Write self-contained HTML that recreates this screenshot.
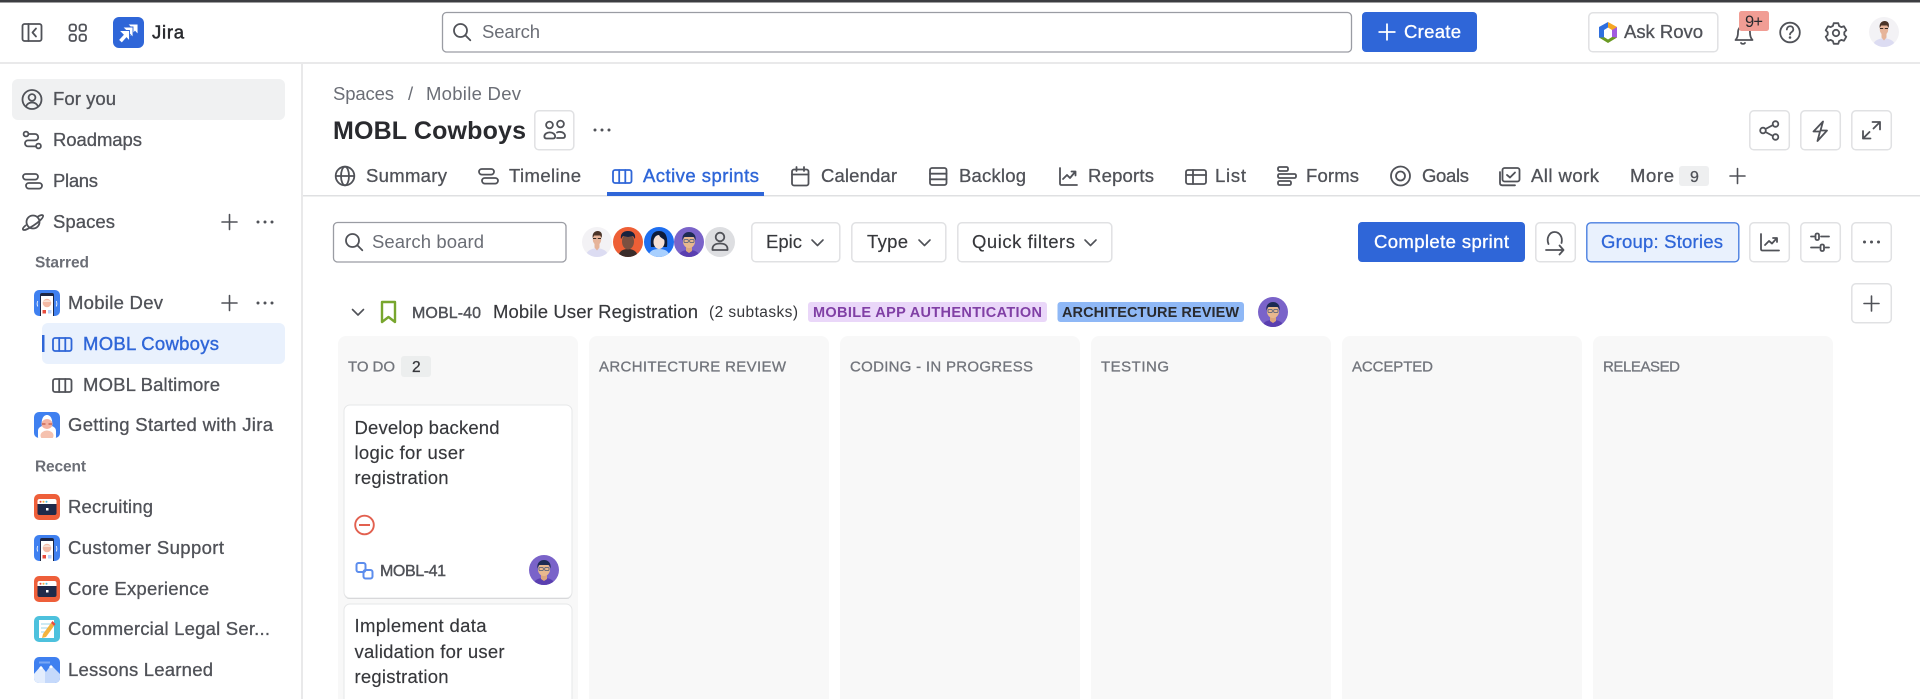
<!DOCTYPE html>
<html lang="en"><head><meta charset="utf-8"><title>MOBL Cowboys - Jira</title>
<style>
html,body{margin:0;padding:0;background:#fff;width:1920px;height:699px;overflow:hidden}
svg{display:block;filter:blur(.3px)}
text{font-family:"Liberation Sans",sans-serif;font-size:18.5px}
.n{fill:#505258;stroke:#505258;stroke-width:.3}
.d{fill:#36373b;stroke:#36373b;stroke-width:.15}
.g{fill:#6b6e76}
.h{font-size:15px;fill:#72757c;stroke:#72757c;stroke-width:.3}
.i{fill:none;stroke:#505258;stroke-width:1.8;stroke-linecap:round;stroke-linejoin:round}
.b{fill:#fff;stroke:#e0e1e3;stroke-width:1.5}
</style></head><body>
<svg width="1920" height="699" viewBox="0 0 1920 699" xmlns="http://www.w3.org/2000/svg">
<defs>
<clipPath id="c"><circle cx="15" cy="15" r="15"/></clipPath>
<clipPath id="t"><rect width="26" height="26" rx="5"/></clipPath>
<g id="board"><rect x="1" y="1" width="18.5" height="13" rx="2"/><path d="M7.2 1v13M13.3 1v13"/></g>
<g id="timeline"><rect x="1" y="1" width="15" height="5.6" rx="2.8"/><rect x="4" y="10" width="16" height="5.6" rx="2.8"/></g>
<g id="plus"><path d="M7.5 0v15M0 7.500h15"/></g>
<g id="dots"><circle cx="0" cy="0" r="1.500" fill="#505258" stroke="none"/><circle cx="7" cy="0" r="1.500" fill="#505258" stroke="none"/><circle cx="14" cy="0" r="1.500" fill="#505258" stroke="none"/></g>
<g id="chev"><path d="M0 0l5.500 5.500L11 0"/></g>
<g id="search"><circle cx="7.500" cy="7.500" r="6.500"/><path d="M12.300 12.300l5 5"/></g>
<path id="jarrow" d="M0 0h10.500v10.500l-3-3.200-4.700 5.200-3.300-3 4.800-5.200z" fill="#fff" stroke="#2f66d8" stroke-width=".9"/>
<symbol id="man" viewBox="0 0 30 30"><g clip-path="url(#c)"><rect width="30" height="30" fill="#f3f2f5"/><path d="M4 30c0-6 4-8 11-9 7 1 11 3 11 9z" fill="#dcdcf2"/><path d="M12.500 17h5v3.500l-2.500 3-2.500-3z" fill="#e5b49a"/><ellipse cx="15" cy="12" rx="4.300" ry="6" fill="#e6b49a"/><path d="M10.700 11c-.7-4.500 1.800-7 5-7s5.200 2.500 3.800 7l-1.300-2.500h-6z" fill="#4a3428"/><path d="M11 11.500h3.200M15.800 11.500H19" stroke="#3a2c25" stroke-width="1"/></g></symbol>
<symbol id="orange" viewBox="0 0 30 30"><g clip-path="url(#c)"><rect width="30" height="30" fill="#ee5f36"/><path d="M5 30c1-6 5-8 10-8s9 2 10 8z" fill="#3a2c2a"/><ellipse cx="15" cy="14.500" rx="6" ry="8" fill="#7a5040"/><path d="M8 12c-1-5 2-8 7-8s8 3 7 8l-2-3-5 1-5-1z" fill="#18233f"/></g></symbol>
<symbol id="blue" viewBox="0 0 30 30"><g clip-path="url(#c)"><rect width="30" height="30" fill="#1f6ff0"/><path d="M7 20c-1-10 1-16 8-16s9 6 8 16z" fill="#0e1b3a"/><path d="M4 30c1-6 5-8 11-8s10 2 11 8z" fill="#a8d0ff"/><ellipse cx="15" cy="15" rx="5.500" ry="7" fill="#f6e0d6"/><path d="M9.500 13c0-4 3-6 5.500-6 0 3 3 4 5.500 6v-5H9z" fill="#0e1b3a"/></g></symbol>
<symbol id="purple" viewBox="0 0 30 30"><g clip-path="url(#c)"><rect width="30" height="30" fill="#7a63c9"/><path d="M4 30c1-5 5-7 11-7s10 2 11 7z" fill="#5a3fb0"/><path d="M12 19h6v5l-3 2-3-2z" fill="#dca67f"/><ellipse cx="15" cy="14.500" rx="6" ry="6.500" fill="#e8b88e"/><path d="M8.500 13.500C7.500 8 11 5 15 5s7.500 3 6.500 8.500L20 10h-10z" fill="#1d2b53"/><rect x="10" y="12.500" width="4.300" height="3" rx="1" fill="none" stroke="#4a5a78" stroke-width=".8"/><rect x="15.700" y="12.500" width="4.300" height="3" rx="1" fill="none" stroke="#4a5a78" stroke-width=".8"/></g></symbol>
<symbol id="mobile" viewBox="0 0 26 26"><g clip-path="url(#t)"><rect width="26" height="26" fill="#3f80f0"/><rect x="6" y="3" width="14" height="25" rx="2" fill="#1d2745"/><rect x="7" y="6" width="12" height="22" fill="#fff"/><circle cx="13" cy="13" r="4.300" fill="#f3b9a4"/><path d="M9 12c.5-2.500 7.500-2.500 8 0z" fill="#f8e0d4"/><rect x="8.500" y="20" width="3.500" height="3.500" fill="#e94c3d"/><rect x="14" y="20" width="3.500" height="3.500" fill="#b9d2fb"/><path d="M3.800 11c-1 2-1 3.500 0 5.500M22.200 11c1 2 1 3.500 0 5.500" stroke="#fff" fill="none" stroke-width=".8"/></g></symbol>
<symbol id="yeti" viewBox="0 0 26 26"><g clip-path="url(#t)"><rect width="26" height="26" fill="#3f80f0"/><path d="M4 26v-7c0-3 2-4 4-5-1-6 1-11 5-11s6 5 5 11c2 1 4 2 4 5v7z" fill="#fff"/><ellipse cx="13" cy="12" rx="5.500" ry="5" fill="#f3b2a2"/><path d="M8 12h3.500M14.500 12H18" stroke="#b3432f" stroke-width="1"/><ellipse cx="13" cy="23.500" rx="6.500" ry="5" fill="#f5c1ae"/></g></symbol>
<symbol id="browser" viewBox="0 0 26 26"><g clip-path="url(#t)"><rect width="26" height="26" fill="#ee5f3a"/><rect x="3.500" y="5" width="19" height="16" rx="2" fill="#1e2a4a"/><path d="M3.500 10V7a2 2 0 0 1 2-2h15a2 2 0 0 1 2 2v3z" fill="#fff"/><circle cx="6.500" cy="7.700" r="1" fill="#e94c3d"/><circle cx="9.500" cy="7.700" r="1" fill="#f3b33e"/><circle cx="12.500" cy="7.700" r="1" fill="#55bfe0"/><rect x="12" y="14" width="2.500" height="2.500" fill="#fff"/></g></symbol>
<symbol id="notes" viewBox="0 0 26 26"><g clip-path="url(#t)"><rect width="26" height="26" fill="#4dc1dd"/><rect x="5" y="4" width="15" height="18" fill="#fff"/><path d="M7 8h10M7 12h8M7 16h6" stroke="#9bd6ea" stroke-width="1"/><path d="M17 7l3 3-8 11-4 1 1-4z" fill="#f3b33e"/><path d="M17 7l3 3 1.500-2-3-3z" fill="#e94c3d"/></g></symbol>
<symbol id="mount" viewBox="0 0 26 26"><g clip-path="url(#t)"><rect width="26" height="26" fill="#3f80f0"/><path d="M0 26V17l7-8 5 6 5-7 9 9v9z" fill="#c5d9fb"/><path d="M0 26V17l7-8 4 5v12z" fill="#e3edfd"/><path d="M5 11l2-2 2 2-2 1.500zM15 10l2-2 2 2-2 1.500z" fill="#fff"/><rect x="5" y="4.500" width="11" height="2" fill="#7aa7f5"/></g></symbol>
</defs>

<rect width="1920" height="699" fill="#fff"/>
<rect width="1920" height="2.500" fill="#3c3d42"/>
<rect y="62" width="1920" height="2" fill="#e9e9ea"/>
<rect x="301" y="64" width="2" height="635" fill="#e9e9ea"/>

<!-- top bar -->
<g class="i"><rect x="22.500" y="24" width="19" height="17" rx="2"/><path d="M28.500 24v17M36 28.500l-3.500 4 3.500 4"/>
<rect x="69.500" y="24.500" width="6.500" height="6.500" rx="2.200"/><rect x="79.500" y="24.500" width="6.500" height="6.500" rx="2.200"/><rect x="69.500" y="34.500" width="6.500" height="6.500" rx="2.200"/><rect x="79.500" y="34.500" width="6.500" height="6.500" rx="2.200"/></g>
<rect x="113" y="17" width="31" height="31" rx="6" fill="#2f66d8"/>
<use href="#jarrow" x="127.500" y="24"/><use href="#jarrow" x="122.500" y="27"/><use href="#jarrow" x="119" y="30.500"/>
<text x="152" y="38.500" textLength="32" style="font-size:18.500px;fill:#292a2e;stroke:#292a2e;stroke-width:.5">Jira</text>

<rect x="442.500" y="12.500" width="909" height="39.500" rx="4" fill="#fff" stroke="#9a9ca3" stroke-width="1.300"/>
<g class="i" transform="translate(453,23)"><use href="#search"/></g>
<text x="482" y="38" textLength="58" class="g">Search</text>
<rect x="1362" y="12" width="115" height="40" rx="4" fill="#2f66d8"/>
<path d="M1387 23.500v17M1378.500 32h17" stroke="#fff" stroke-width="1.800" fill="none"/>
<text x="1404" y="38" textLength="57" fill="#fff" stroke="#fff" stroke-width=".35">Create</text>

<rect x="1588.800" y="12.800" width="129" height="39" rx="4" class="b"/>
<g transform="translate(1599,22)"><path d="M9 0l9 5v5.500H13V8L9 5.500z" fill="#f5a623"/><path d="M18 5v10.500l-5 2.800V8z" fill="#a25be0"/><path d="M18 15.500L9 21l-9-5.500v-.500h5l4 2.500 4-2.500z" fill="#6a9a23"/><path d="M0 15.500V5l9-5v5.500L5 8v7.500z" fill="#2f6fdf"/></g>
<text x="1624" y="38" textLength="79" class="n">Ask Rovo</text>

<g class="i"><path d="M1735.500 40h17c-2-2-2.500-4-2.500-7.500 0-4-2.300-6.500-6-6.500s-6 2.500-6 6.500c0 3.500-.5 5.500-2.500 7.500zM1741 43c.8 1.200 3.200 1.200 4 0"/>
<circle cx="1790" cy="32.500" r="9.800"/><path d="M1786.800 29.500c.4-4.300 6.500-4.300 6.500 0 0 2.600-3.300 2.500-3.300 5"/>
<circle cx="1836" cy="33" r="3.200"/>
<path d="M1833.700 23.700h4.600l.8 2.700 2.200 1.200 2.700-.8 2.300 4-2 2 0 2.400 2 2-2.300 4-2.700-.8-2.200 1.200-.8 2.700h-4.600l-.8-2.700-2.200-1.200-2.700.8-2.300-4 2-2 0-2.400-2-2 2.300-4 2.700.8 2.200-1.200z" transform="translate(0,-.5)"/></g>
<circle cx="1790" cy="37.500" r="1.300" fill="#505258"/>
<rect x="1739" y="11" width="30" height="20" rx="2.500" fill="#f19d94"/>
<text x="1745" y="27" textLength="18" fill="#292a2e" style="font-size:16.500px">9+</text>
<use href="#man" x="1869" y="17" width="30" height="30"/>

<!-- sidebar -->
<rect x="12" y="79" width="273" height="41" rx="6" fill="#f0f1f2"/>
<g class="i">
<g transform="translate(22,90)"><circle cx="10" cy="9.500" r="9.500"/><circle cx="10" cy="7.500" r="3.400"/><path d="M4 16.500c1.200-3 3.300-4 6-4s4.800 1 6 4"/></g>
<g transform="translate(23,131)"><circle cx="3" cy="3" r="2.400"/><circle cx="15.500" cy="15" r="2.400"/><path d="M5.500 3H12a3.200 3.200 0 0 1 0 6.400H5a3 3 0 0 0 0 6h8"/></g>
<g transform="translate(22,173)"><use href="#timeline"/></g>
<g transform="translate(22,212)"><circle cx="11" cy="10" r="6.500"/><path d="M16 4.500c2.600-1.500 4.500-1.800 5-1 .9 1.600-3.400 6.200-9.500 10S1.900 19 1 17.500c-.5-.8.5-2.300 2.500-4"/></g>
</g>
<text x="53" y="105" textLength="63" class="n">For you</text>
<text x="53" y="146" textLength="89" class="n">Roadmaps</text>
<text x="53" y="187" textLength="45" class="n">Plans</text>
<text x="53" y="228" textLength="62" class="n">Spaces</text>
<g class="i" style="stroke-width:1.600"><g transform="translate(222,214.500)"><use href="#plus"/></g><g transform="translate(222,295.500)"><use href="#plus"/></g></g>
<use href="#dots" x="258" y="222"/><use href="#dots" x="258" y="303"/>
<text x="35" y="267.500" textLength="54" class="g" style="font-size:15.500px;font-weight:bold">Starred</text>
<use href="#mobile" x="34" y="290" width="26" height="26"/>
<text x="68" y="309" textLength="95" class="n">Mobile Dev</text>
<rect x="42" y="323" width="243" height="41" rx="6" fill="#e9f1fd"/>
<rect x="42" y="335" width="2.500" height="17" fill="#2f66d8"/>
<g class="i" style="stroke:#2f66d8" transform="translate(52,337)"><use href="#board"/></g>
<text x="83" y="350" textLength="136" fill="#2f66d8" stroke="#2f66d8" stroke-width=".4">MOBL Cowboys</text>
<g class="i" transform="translate(52,378)"><use href="#board"/></g>
<text x="83" y="391" textLength="137" class="n">MOBL Baltimore</text>
<use href="#yeti" x="34" y="412" width="26" height="26"/>
<text x="68" y="431" textLength="205" class="n">Getting Started with Jira</text>
<text x="35" y="471.500" textLength="51" class="g" style="font-size:15.500px;font-weight:bold">Recent</text>
<use href="#browser" x="34" y="494" width="26" height="26"/>
<text x="68" y="513" textLength="85" class="n">Recruiting</text>
<use href="#mobile" x="34" y="535" width="26" height="26"/>
<text x="68" y="554" textLength="156" class="n">Customer Support</text>
<use href="#browser" x="34" y="576" width="26" height="26"/>
<text x="68" y="595" textLength="141" class="n">Core Experience</text>
<use href="#notes" x="34" y="616" width="26" height="26"/>
<text x="68" y="635" textLength="202" class="n">Commercial Legal Ser...</text>
<use href="#mount" x="34" y="657" width="26" height="26"/>
<text x="68" y="676" textLength="145" class="n">Lessons Learned</text>

<!-- header -->
<text x="333" y="100" textLength="61" class="g">Spaces</text>
<text x="408" y="100" class="g">/</text>
<text x="426" y="100" textLength="95" class="g">Mobile Dev</text>
<text x="333" y="139" textLength="193" style="font-size:25px;font-weight:bold;fill:#292a2e">MOBL Cowboys</text>
<rect x="534.800" y="110.800" width="39" height="39" rx="4" class="b"/>
<g class="i"><circle cx="549.500" cy="125" r="3.400"/><circle cx="560.500" cy="124" r="3.400"/><path d="M546.500 138.500h6.500c2.500 0 3-3 .5-5-2-1.500-5.500-1.500-7.500 0-2.500 2-2 5 .5 5z"/><path d="M557 132.500c2-1 5-.7 6.500.5 2.300 2 1.800 5-.5 5h-6"/></g>
<use href="#dots" x="595" y="130"/>
<g class="b"><rect x="1749.800" y="110.800" width="39.500" height="39" rx="4"/><rect x="1800.800" y="110.800" width="39.500" height="39" rx="4"/><rect x="1851.800" y="110.800" width="39.500" height="39" rx="4"/></g>
<g class="i"><circle cx="1763" cy="130.500" r="2.800"/><circle cx="1775.500" cy="124" r="2.800"/><circle cx="1775.500" cy="137" r="2.800"/><path d="M1765.500 129l7.500-4M1765.500 132l7.500 4"/>
<path d="M1823 121.500l-9.500 10h6.500l-2.500 9.500 9.500-10.500h-6.500z"/>
<path d="M1872.500 122h7.500v7.500M1880 122l-6.500 6.500M1863 131v7.500h7.500M1863 138.500l6.500-6.500"/></g>

<!-- tabs -->
<g class="i">
<g transform="translate(335,166)"><circle cx="10" cy="10" r="9.300"/><ellipse cx="10" cy="10" rx="4" ry="9.300"/><path d="M1 10h18"/></g>
<g transform="translate(478,168)"><use href="#timeline"/></g>
<g transform="translate(791,167)"><rect x="1" y="2.500" width="16.500" height="16" rx="2"/><path d="M1 7.500h16.500M5.500 0v4M13 0v4"/></g>
<g transform="translate(929,167)"><rect x="1" y="1" width="16.500" height="17" rx="2"/><path d="M1 6.700h16.500M1 12.300h16.500"/></g>
<g transform="translate(1059,167)"><path d="M1 1v15.500c0 1 .5 1.500 1.500 1.500H18"/><path d="M4 12l4-4 3 3 5-6M12.500 4.500h4v4"/></g>
<g transform="translate(1185,169)"><rect x="1" y="1" width="20" height="14" rx="2"/><path d="M1 6h20M8 1v14"/></g>
<g transform="translate(1277,166)"><rect x="1" y="1" width="10" height="4" rx="1.500"/><rect x="1" y="8" width="18" height="4" rx="1.500"/><rect x="1" y="15" width="13" height="4" rx="1.500"/></g>
<g transform="translate(1390,166)"><circle cx="10.500" cy="10" r="9.500"/><circle cx="10.500" cy="10" r="4.500"/></g>
<g transform="translate(1499,167)"><rect x="3.500" y="1" width="17" height="13.500" rx="2"/><path d="M1 5v11c0 1.500.8 2.300 2.300 2.300H16"/><path d="M8 8l3 2.500 5-5"/></g>
</g>
<g class="i" style="stroke:#2f66d8" transform="translate(612,169)"><use href="#board"/></g>
<text x="366" y="182" textLength="81" class="n">Summary</text>
<text x="509" y="182" textLength="72" class="n">Timeline</text>
<text x="821" y="182" textLength="76" class="n">Calendar</text>
<text x="959" y="182" textLength="67" class="n">Backlog</text>
<text x="1088" y="182" textLength="66" class="n">Reports</text>
<text x="1215" y="182" textLength="31" class="n">List</text>
<text x="1306" y="182" textLength="53" class="n">Forms</text>
<text x="1422" y="182" textLength="47" class="n">Goals</text>
<text x="1531" y="182" textLength="68" class="n">All work</text>
<text x="1630" y="182" textLength="44" class="n">More</text>
<text x="643" y="182" textLength="116" fill="#2f66d8" stroke="#2f66d8" stroke-width=".4">Active sprints</text>
<rect y="195" x="303" width="1617" height="1.500" fill="#dfe0e2"/>
<rect x="607" y="192" width="157" height="4" fill="#2f66d8"/>
<rect x="1679" y="166" width="30" height="20" rx="3" fill="#eeeff0"/>
<text x="1690" y="182" textLength="9" class="n" style="font-size:16px">9</text>
<g class="i" style="stroke-width:1.600" transform="translate(1730,168.500)"><use href="#plus"/></g>

<!-- toolbar -->
<rect x="333.500" y="222.500" width="232.500" height="39.500" rx="4" fill="#fff" stroke="#9a9ca3" stroke-width="1.300"/>
<g class="i" transform="translate(345,233)"><use href="#search"/></g>
<text x="372" y="248" textLength="112" class="g">Search board</text>
<use href="#man" x="582" y="227" width="30" height="30"/>
<use href="#orange" x="613" y="227" width="30" height="30"/>
<use href="#blue" x="644" y="227" width="30" height="30"/>
<use href="#purple" x="674" y="227" width="30" height="30"/>
<circle cx="720" cy="242" r="15" fill="#dddee1"/>
<g class="i"><circle cx="720" cy="237" r="4.300"/><path d="M712.500 250v-1c0-4 3.400-5.500 7.500-5.500s7.500 1.500 7.500 5.500v1z"/></g>
<g class="b"><rect x="751.800" y="222.800" width="88" height="39" rx="4"/><rect x="851.800" y="222.800" width="94" height="39" rx="4"/><rect x="957.800" y="222.800" width="154" height="39" rx="4"/></g>
<text x="766" y="248" textLength="36" class="d">Epic</text>
<text x="867" y="248" textLength="41" class="d">Type</text>
<text x="972" y="248" textLength="103" class="d">Quick filters</text>
<g class="i" style="stroke-width:1.600"><g transform="translate(812,240)"><use href="#chev"/></g><g transform="translate(919,240)"><use href="#chev"/></g><g transform="translate(1085,240)"><use href="#chev"/></g></g>

<rect x="1358" y="222" width="167" height="40" rx="4" fill="#2f66d8"/>
<text x="1374" y="248" textLength="135" fill="#fff" stroke="#fff" stroke-width=".35">Complete sprint</text>
<g class="b"><rect x="1535.800" y="222.800" width="39.500" height="39" rx="4"/><rect x="1749.800" y="222.800" width="39.500" height="39" rx="4"/><rect x="1800.800" y="222.800" width="39.500" height="39" rx="4"/><rect x="1851.800" y="222.800" width="39.500" height="39" rx="4"/><rect x="1851.800" y="283.800" width="39.500" height="39" rx="4"/></g>
<rect x="1586.800" y="222.800" width="152" height="39" rx="4" fill="#e9f1fd" stroke="#4a7fe0" stroke-width="1.400"/>
<text x="1601" y="248" textLength="122" fill="#2f66d8" stroke="#2f66d8" stroke-width=".3">Group: Stories</text>
<g class="i">
<path d="M1548.500 246c-2.500-6 1-12 6-12s8.500 5 7 11M1546 252h17M1559.500 247.500l4 4.500-4 4.500" transform="translate(0,-2)"/>
<path d="M1761 234v15c0 1 .5 1.500 1.500 1.500H1779M1765 245l4-4 3 2.500 4.500-5M1773 238h4v4"/>
<path d="M1811 236.500h3.500M1821 236.500h8M1811 247.500h8M1825.500 247.500h3.500"/><rect x="1815.500" y="233.500" width="3.500" height="6.500" rx="1.500"/><rect x="1820.500" y="244.500" width="3.500" height="6.500" rx="1.500"/>
</g>
<use href="#dots" x="1864.500" y="242"/>
<g class="i" style="stroke-width:1.600" transform="translate(1864,296)"><use href="#plus"/></g>

<!-- story row -->
<g class="i" style="stroke-width:1.600" transform="translate(352.500,309.500)"><use href="#chev"/></g>
<path d="M382 302h13v20l-6.500-5-6.500 5z" fill="none" stroke="#78a62e" stroke-width="2.400" stroke-linejoin="round"/>
<text x="412" y="318" textLength="69" class="n" style="font-size:16px;stroke-width:.4">MOBL-40</text>
<text x="493" y="318" textLength="205" class="d">Mobile User Registration</text>
<text x="709" y="317" textLength="89" class="d" style="font-size:15.500px;stroke-width:0">(2 subtasks)</text>
<rect x="808" y="302" width="239" height="20" rx="3" fill="#ead7f9"/>
<text x="813" y="317" textLength="229" style="font-size:14.500px;font-weight:bold;fill:#803fa5">MOBILE APP AUTHENTICATION</text>
<rect x="1057.500" y="302" width="186.500" height="20" rx="3" fill="#8fb8f6"/>
<text x="1062" y="317" textLength="177" style="font-size:14.500px;font-weight:bold;fill:#292a2e">ARCHITECTURE REVIEW</text>
<use href="#purple" x="1258" y="297" width="30" height="30"/>

<!-- columns -->
<g fill="#f8f8f8">
<path d="M338 699V344a8 8 0 0 1 8-8h224a8 8 0 0 1 8 8v355z"/>
<path d="M589 699V344a8 8 0 0 1 8-8h224a8 8 0 0 1 8 8v355z"/>
<path d="M840 699V344a8 8 0 0 1 8-8h224a8 8 0 0 1 8 8v355z"/>
<path d="M1091 699V344a8 8 0 0 1 8-8h224a8 8 0 0 1 8 8v355z"/>
<path d="M1342 699V344a8 8 0 0 1 8-8h224a8 8 0 0 1 8 8v355z"/>
<path d="M1593 699V344a8 8 0 0 1 8-8h224a8 8 0 0 1 8 8v355z"/>
</g>
<text x="348" y="371.500" textLength="47" class="h">TO DO</text>
<rect x="401" y="356" width="30" height="21" rx="3" fill="#eceeee"/>
<text x="412" y="372" textLength="9" class="d" style="font-size:15.500px;stroke-width:.3">2</text>
<text x="599" y="371.500" textLength="187" class="h">ARCHITECTURE REVIEW</text>
<text x="850" y="371.500" textLength="183" class="h">CODING - IN PROGRESS</text>
<text x="1101" y="371.500" textLength="68" class="h">TESTING</text>
<text x="1352" y="371.500" textLength="81" class="h">ACCEPTED</text>
<text x="1603" y="371.500" textLength="77" class="h">RELEASED</text>

<!-- cards -->
<rect x="344" y="406.500" width="228" height="192.500" rx="6" fill="#c9cacd"/>
<rect x="344" y="405" width="228" height="193" rx="6" fill="#fff" stroke="#e6e7e8" stroke-width="1"/>
<text x="354.500" y="434" textLength="145" class="d">Develop backend</text>
<text x="354.500" y="459" textLength="110" class="d">logic for user</text>
<text x="354.500" y="484" textLength="94" class="d">registration</text>
<circle cx="364.500" cy="525" r="9.300" fill="none" stroke="#e2604f" stroke-width="1.900"/>
<path d="M359 525h11" stroke="#e2604f" stroke-width="2"/>
<g fill="none" stroke="#5c8ded" stroke-width="2" stroke-linejoin="round"><rect x="356.500" y="563" width="9" height="9" rx="2"/><rect x="363.500" y="570" width="9" height="8.500" rx="2"/></g>
<text x="380" y="576" textLength="66" class="n" style="font-size:16px;stroke-width:.4">MOBL-41</text>
<use href="#purple" x="529" y="555" width="30" height="30"/>
<rect x="344" y="604" width="228" height="120" rx="6" fill="#fff" stroke="#e6e7e8" stroke-width="1"/>
<text x="354.500" y="632" textLength="132" class="d">Implement data</text>
<text x="354.500" y="658" textLength="150" class="d">validation for user</text>
<text x="354.500" y="683" textLength="94" class="d">registration</text>
</svg>
</body></html>
